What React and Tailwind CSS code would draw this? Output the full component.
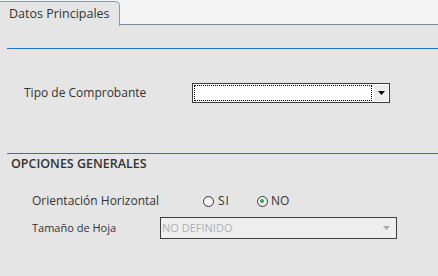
import React from "react";

const App = () => {
  return (
    <div
      className="w-[438px] h-[276px] bg-[#e5e5e5] text-[#333] overflow-hidden"
      style={{ fontFamily: '"Open Sans", "DejaVu Sans", sans-serif' }}
    >
      {/* Tabs */}
      <div className="flex h-[25px] bg-[#f4f4f4]">
        <div className="w-[120px] h-[25px] mt-[1px] bg-[#e5e5e5] border-t border-r border-[#8a98a4] rounded-tr-[5px] text-[12.5px] pl-[9px] leading-[24px]">
          Datos Principales
        </div>
        <div className="flex-1 border-b border-[#7a8a96]" />
      </div>

      <div className="ml-[7px] mt-[23px] border-t border-[#1b74c9]" />

      {/* Tipo de Comprobante */}
      <div className="flex items-center mt-[34px] h-[20px]">
        <span className="w-[192px] pl-[24px] text-[12px]">Tipo de Comprobante</span>
        <div className="flex w-[198px] h-[20px] border border-[#3c3c3c] bg-white p-[1px]">
          <div className="flex-1 border border-dotted border-black" />
          <div className="w-[14px] ml-[2px] bg-[#ececec] flex items-center justify-center">
            <svg width="7" height="4" viewBox="0 0 7 4">
              <path d="M0 0h7L3.5 4z" fill="#000" />
            </svg>
          </div>
        </div>
      </div>

      <div className="ml-[7px] mt-[50px] border-t border-[#4f6a84]" />

      <div className="pl-[11px] mt-[1px] text-[12.5px] font-semibold leading-[18px]">
        OPCIONES GENERALES
      </div>

      {/* Orientacion */}
      <div className="flex items-center mt-[20px] h-[16px] text-[12px]">
        <span className="w-[203px] pl-[32px]">Orientación Horizontal</span>
        <div className="flex items-center">
          <span className="w-[11px] h-[11px] rounded-full border border-[#333] bg-[#f4f4f4]" />
          <span className="ml-[4px] tracking-[1px]">SI</span>
        </div>
        <div className="flex items-center ml-[27px]">
          <span className="w-[11px] h-[11px] rounded-full border border-[#333] bg-[#f4f4f4] flex items-center justify-center">
            <span className="w-[4px] h-[4px] rounded-full bg-[#2aa34a]" />
          </span>
          <span className="ml-[3px]">NO</span>
        </div>
      </div>

      {/* Tamaño de Hoja */}
      <div className="flex items-center mt-[8px] h-[22px]">
        <span className="w-[160px] pl-[32px] text-[11px]">Tamaño de Hoja</span>
        <div className="flex items-center w-[237px] h-[22px] border border-[#3c3c3c] bg-[#efefef] pl-[1px] pr-[6px]">
          <span className="flex-1 text-[11px] text-[#a9aebb]">NO DEFINIDO</span>
          <svg width="7" height="4" viewBox="0 0 7 4">
            <path d="M0 0h7L3.5 4z" fill="#aaa" />
          </svg>
        </div>
      </div>
    </div>
  );
};

export default App;
